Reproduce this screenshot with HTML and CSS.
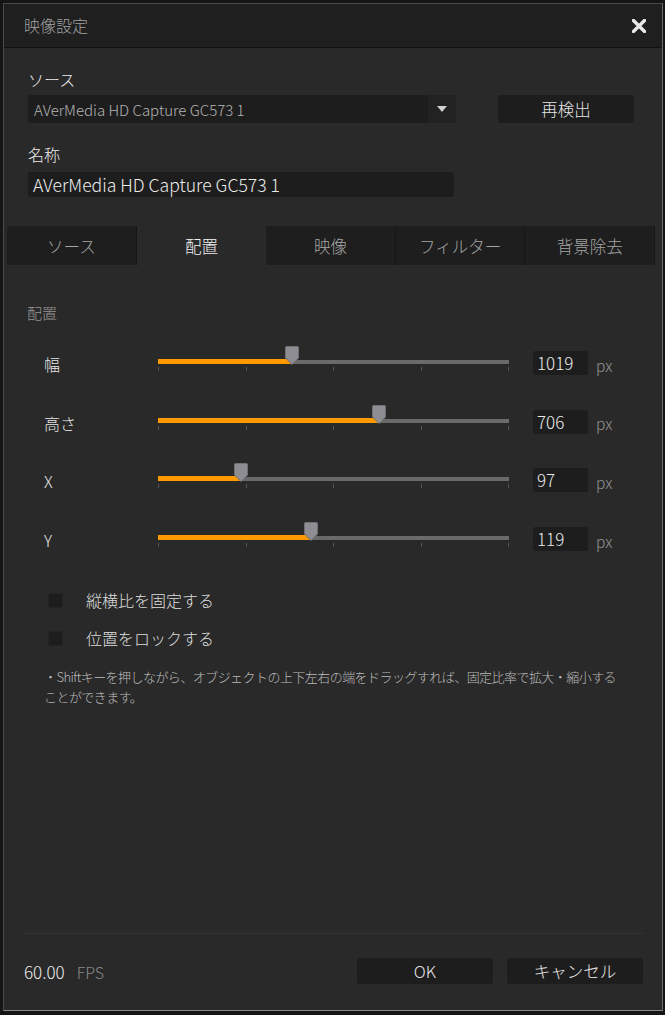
FILE: index.html
```html
<!DOCTYPE html>
<html lang="ja">
<head>
    <meta charset="UTF-8">
    <title>映像設定</title>
    <link rel="stylesheet" href="styles.css">
</head>
<body>
    <div class="dialog">
        <div class="titlebar">
            <span class="title">映像設定</span>
            <svg class="close" width="14" height="14" viewBox="0 0 14 14">
                <path d="M1.5 1.5 L12.5 12.5 M12.5 1.5 L1.5 12.5" stroke="#e8e8e8" stroke-width="3.4" stroke-linecap="square"/>
            </svg>
        </div>

        <div class="source">
            <div class="field-label">ソース</div>
            <div class="source-row">
                <div class="select">
                    <span>AVerMedia HD Capture GC573 1</span>
                    <span class="select-arrow">
                        <svg width="10" height="6" viewBox="0 0 10 6"><path d="M0 0 H10 L5 6 Z" fill="#d0d0d0"/></svg>
                    </span>
                </div>
                <div class="btn btn-rescan">再検出</div>
            </div>
            <div class="field-label name-label">名称</div>
            <div class="name-input">AVerMedia HD Capture GC573 1</div>
        </div>

        <div class="tabs">
            <div class="tab">ソース</div>
            <div class="tab active">配置</div>
            <div class="tab">映像</div>
            <div class="tab">フィルター</div>
            <div class="tab">背景除去</div>
        </div>

        <div class="panel">
            <div class="section-label">配置</div>

            <div class="sliders">
                <div class="slider-row">
                    <span class="slider-label">幅</span>
                    <div class="slider">
                        <div class="track"></div>
                        <div class="fill" style="width: 38.2%"></div>
                        <div class="ticks"><i></i><i></i><i></i><i></i><i></i></div>
                        <svg class="thumb" style="left: 38.2%" width="14" height="19" viewBox="0 0 14 19"><path d="M1.5 0.5 H12.5 Q13.5 0.5 13.5 1.5 V12 L7 18.5 L0.5 12 V1.5 Q0.5 0.5 1.5 0.5 Z" fill="#8d8d93" stroke="#707075"/></svg>
                    </div>
                    <div class="value">1019</div>
                    <span class="unit">px</span>
                </div>
                <div class="slider-row">
                    <span class="slider-label">高さ</span>
                    <div class="slider">
                        <div class="track"></div>
                        <div class="fill" style="width: 63%"></div>
                        <div class="ticks"><i></i><i></i><i></i><i></i><i></i></div>
                        <svg class="thumb" style="left: 63%" width="14" height="19" viewBox="0 0 14 19"><path d="M1.5 0.5 H12.5 Q13.5 0.5 13.5 1.5 V12 L7 18.5 L0.5 12 V1.5 Q0.5 0.5 1.5 0.5 Z" fill="#8d8d93" stroke="#707075"/></svg>
                    </div>
                    <div class="value">706</div>
                    <span class="unit">px</span>
                </div>
                <div class="slider-row">
                    <span class="slider-label">X</span>
                    <div class="slider">
                        <div class="track"></div>
                        <div class="fill" style="width: 23.6%"></div>
                        <div class="ticks"><i></i><i></i><i></i><i></i><i></i></div>
                        <svg class="thumb" style="left: 23.6%" width="14" height="19" viewBox="0 0 14 19"><path d="M1.5 0.5 H12.5 Q13.5 0.5 13.5 1.5 V12 L7 18.5 L0.5 12 V1.5 Q0.5 0.5 1.5 0.5 Z" fill="#8d8d93" stroke="#707075"/></svg>
                    </div>
                    <div class="value">97</div>
                    <span class="unit">px</span>
                </div>
                <div class="slider-row">
                    <span class="slider-label">Y</span>
                    <div class="slider">
                        <div class="track"></div>
                        <div class="fill" style="width: 43.6%"></div>
                        <div class="ticks"><i></i><i></i><i></i><i></i><i></i></div>
                        <svg class="thumb" style="left: 43.6%" width="14" height="19" viewBox="0 0 14 19"><path d="M1.5 0.5 H12.5 Q13.5 0.5 13.5 1.5 V12 L7 18.5 L0.5 12 V1.5 Q0.5 0.5 1.5 0.5 Z" fill="#8d8d93" stroke="#707075"/></svg>
                    </div>
                    <div class="value">119</div>
                    <span class="unit">px</span>
                </div>
            </div>

            <div class="checks">
                <label class="check"><span class="box"></span>縦横比を固定する</label>
                <label class="check"><span class="box"></span>位置をロックする</label>
            </div>

            <p class="note">・Shiftキーを押しながら、オブジェクトの上下左右の端をドラッグすれば、固定比率で拡大・縮小する<br>ことができます。</p>
        </div>

        <div class="separator"></div>

        <div class="footer">
            <div class="fps"><span class="fps-num">60.00</span><span class="fps-unit">FPS</span></div>
            <div class="footer-buttons">
                <div class="btn">OK</div>
                <div class="btn">キャンセル</div>
            </div>
        </div>
    </div>
</body>
</html>
```

FILE: styles.css
```css
* {
    box-sizing: border-box;
}

body {
    margin: 0;
    background: #151515;
    font-family: "Noto Sans CJK JP", "Noto Sans", sans-serif;
    font-weight: 300;
    color: #e0e0e0;
    overflow: hidden;
}

.dialog {
    margin: 3px 2px 0 3px;
    height: 1008px;
    background: #292929;
    border: 1px solid #4a4a4a;
    border-right-color: #6a6a6a;
    border-bottom-color: #8a8a8a;
    display: flex;
    flex-direction: column;
}

/* title bar */
.titlebar {
    height: 44px;
    flex: none;
    background: #1f1f1f;
    border-bottom: 1px solid #111;
    display: flex;
    align-items: center;
    justify-content: space-between;
    padding: 0 16px 0 20px;
}

.title {
    font-size: 16px;
    color: #a2a2a2;
    margin-top: -1px;
}

.close {
    margin-top: 1px;
}

/* source / name */
.source {
    padding: 21px 0 0 24px;
}

.field-label {
    font-size: 16px;
    line-height: 20px;
    color: #ececec;
    margin-bottom: 6px;
}

.name-label {
    margin-top: 21px;
    margin-bottom: 8px;
}

.source-row {
    display: flex;
    align-items: center;
    gap: 42px;
}

.select {
    width: 428px;
    height: 28px;
    background: #1d1d1d;
    border-radius: 3px;
    display: flex;
    align-items: center;
    justify-content: space-between;
    padding-left: 6px;
    font-size: 15px;
    color: #b4b4b4;
    overflow: hidden;
}

.select-arrow {
    width: 28px;
    height: 28px;
    background: #222;
    display: flex;
    align-items: center;
    justify-content: center;
}

.btn {
    width: 136px;
    height: 26px;
    background: #1d1d1d;
    border-radius: 3px;
    display: flex;
    align-items: center;
    justify-content: center;
    font-size: 16.5px;
    color: #e6e6e6;
}

.btn-rescan {
    height: 28px;
}

.name-input {
    width: 426px;
    height: 25px;
    background: #1d1d1d;
    border-radius: 3px;
    padding-left: 5px;
    font-size: 17.6px;
    line-height: 25px;
    color: #ececec;
}

/* tabs */
.tabs {
    margin: 29px 7px 0 3px;
    height: 39px;
    display: grid;
    grid-template-columns: repeat(5, 1fr);
}

.tab {
    background: #1e1e1e;
    border-right: 1px solid #161616;
    display: flex;
    align-items: center;
    justify-content: center;
    font-size: 16.5px;
    color: #a4a4a4;
}

.tab.active {
    background: transparent;
    border-right: none;
    color: #f0f0f0;
}

/* panel */
.panel {
    padding: 38px 0 0 23px;
}

.section-label {
    font-size: 15px;
    line-height: 20px;
    color: #969696;
}

.sliders {
    margin-top: 26px;
    display: flex;
    flex-direction: column;
    gap: 30.7px;
}

.slider-row {
    height: 28px;
    display: flex;
    align-items: center;
    padding-left: 17px;
}

.slider-label {
    width: 114px;
    font-size: 16px;
    color: #e6e6e6;
    margin-top: 2px;
}

.slider {
    position: relative;
    width: 351px;
    height: 28px;
}

.track {
    position: absolute;
    left: 0;
    right: 0;
    top: 11px;
    height: 4px;
    background: #6a6a6a;
}

.fill {
    position: absolute;
    left: 0;
    top: 10px;
    height: 5px;
    background: #ff9900;
}

.ticks {
    position: absolute;
    left: 0;
    right: 0;
    top: 18px;
    height: 4px;
    display: flex;
    justify-content: space-between;
}

.ticks i {
    width: 1px;
    height: 4px;
    background: #555;
}

.thumb {
    position: absolute;
    top: -3px;
    margin-left: -7px;
}

.value {
    margin-left: 24px;
    width: 55px;
    height: 24px;
    background: #1d1d1d;
    border-radius: 3px;
    padding-left: 4px;
    font-size: 17px;
    line-height: 24px;
    color: #ececec;
}

.unit {
    margin-left: 8px;
    font-size: 15.5px;
    color: #969696;
    margin-top: 3px;
}

/* checkboxes */
.checks {
    margin-top: 37px;
    padding-left: 21px;
    display: flex;
    flex-direction: column;
    gap: 18px;
}

.check {
    display: flex;
    align-items: center;
    height: 20px;
    font-size: 16px;
    color: #dedede;
}

.box {
    width: 15px;
    height: 15px;
    background: #1c1d1c;
    border: 1px solid #232423;
    margin-right: 23px;
}

.note {
    margin: 19px 0 0 17px;
    font-size: 13px;
    line-height: 20px;
    color: #bababa;
    letter-spacing: -0.55px;
}

/* footer */
.separator {
    margin: auto 19px 0 19px;
    height: 1px;
    background: #333;
}

.footer {
    display: flex;
    align-items: center;
    justify-content: space-between;
    padding: 24px 19px 26px 20px;
}

.fps {
    font-size: 16px;
}

.fps-num {
    color: #ececec;
    font-size: 17px;
}

.fps-unit {
    color: #888;
    margin-left: 12px;
}

.footer-buttons {
    display: flex;
    gap: 14px;
}
```
